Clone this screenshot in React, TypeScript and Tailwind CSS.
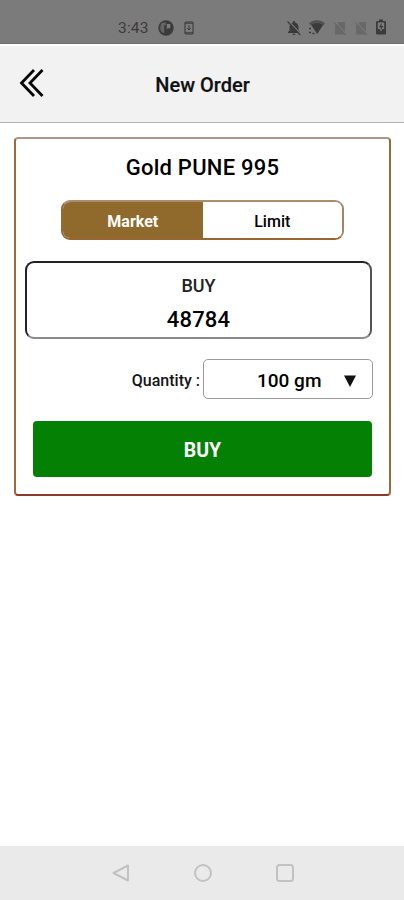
import { useState } from 'react';

type OrderType = 'Market' | 'Limit';

const StatusBar = () => (
  <div className="flex h-11 shrink-0 items-start border-b border-[#6c6c6c] bg-[#7b7b7b] pt-[19px] pl-[118px] text-[#3b3b3b]">
    <span className="w-10 text-[15.5px] leading-[18px] tracking-[0.2px]">3:43</span>
    <svg className="mt-px h-4 w-4" viewBox="0 0 16 16">
      <circle cx="8" cy="8" r="7.7" fill="currentColor" />
      <path d="M3.2 3.6C4.5 2.6 6.5 2.3 8 3V5H6.2V13.2C3.5 12.5 2 10 2.2 7.2Z" fill="#656565" />
      <path d="M8.8 4H12.3V8.2H9.8L8.8 9.5Z" fill="#7b7b7b" />
    </svg>
    <svg className="mt-[2px] ml-[10px] h-[14px] w-[10px]" viewBox="0 0 10 14" fill="none" stroke="currentColor">
      <rect x="1" y="1" width="8" height="12" rx="1" strokeWidth="1.1" />
      <path d="M1 2.2H9M1 11.8H9M5 4.3V9M3.4 7.3L5 9L6.6 7.3" />
    </svg>

    <svg className="mt-px ml-[92px] h-4 w-4" viewBox="0 0 16 16">
      <path
        d="M8 1C8.8 1 9.2 1.6 9.2 2.5C11.5 3.2 12.5 5 12.5 7V10.5L14 12V13H2V12L3.5 10.5V7C3.5 5 4.6 3.2 6.8 2.5C6.8 1.6 7.2 1 8 1ZM6.5 13.7H9.5C9.5 15.5 6.5 15.5 6.5 13.7Z"
        fill="currentColor"
      />
      <path d="M2.5 1L15 14.2" stroke="#7b7b7b" strokeWidth="1.2" />
      <path d="M1.5 1.5L14.3 15" stroke="currentColor" strokeWidth="1.1" />
    </svg>
    <svg className="ml-[6px] h-4 w-[18px]" viewBox="0 0 18 16">
      <path d="M1 4.5C5.5 0.2 12.5 0.2 17 4.5L15.5 6.2C11.5 2.5 6.5 2.5 2.5 6.2Z" fill="#505050" />
      <path d="M3 5.8C6.7 3 11.3 3 15.3 5.8L9.2 15Z" fill="currentColor" />
      <path d="M1 9.5H3M1 13.5H3M4.5 14.5H6.5" stroke="currentColor" strokeWidth="1.5" />
    </svg>
    <NoSimIcon className="ml-[7px]" />
    <NoSimIcon className="ml-[7px]" />
    <svg className="ml-[7px] h-4 w-3" viewBox="0 0 12 16">
      <path
        d="M4 0.5H8V2H9.5C10.3 2 11 2.7 11 3.5V14C11 15 10.3 15.5 9.5 15.5H2.5C1.7 15.5 1 15 1 14V3.5C1 2.7 1.7 2 2.5 2H4Z"
        fill="currentColor"
      />
      <path d="M2.8 3.5H9.2V10H7.5L6 12.5L4.5 10H2.8Z" fill="#7b7b7b" />
      <path d="M6.5 4L4 8.2H5.8V11L8.3 7H6.5Z" fill="currentColor" />
    </svg>
  </div>
);

const NoSimIcon = ({ className }: { className: string }) => (
  <svg className={`mt-px h-4 w-[14px] ${className}`} viewBox="0 0 14 16">
    <path d="M6 2H12V14.5H2V5.5Z" fill="#686868" />
    <path d="M1.5 1.5L14 15" stroke="#7b7b7b" strokeWidth="1.3" />
    <path d="M0.8 2L13 15" stroke="#656565" />
  </svg>
);

const Header = () => (
  <header className="grid h-[79px] shrink-0 grid-cols-[80px_1fr_80px] items-center border-t-2 border-b border-t-white border-b-[#b2b2b2] bg-[#f2f2f2]">
    <button type="button" aria-label="Back" className="pb-[2px] pl-[18px]">
      <svg className="h-[30px] w-[28px]" viewBox="0 0 28 30" fill="none" stroke="#080808" strokeWidth="2.8">
        <path d="M16 2L3.5 15L16 28M24.5 2L12 15L24.5 28" />
      </svg>
    </button>
    <h1 className="pt-px pl-px text-center text-[20px] font-medium text-[#111] [-webkit-text-stroke:0.2px]">
      New Order
    </h1>
  </header>
);

const OrderCard = () => {
  const [orderType, setOrderType] = useState<OrderType>('Market');
  const types: OrderType[] = ['Market', 'Limit'];

  return (
    <section className="mt-[14px] mr-[13px] ml-[14px] flex h-[359px] flex-col rounded-[4px] border-2 border-t-[#ad978b] border-r-[#936c39] border-b-[#8e392d] border-l-[#a06a3a]">
      <h2 className="mt-[14px] text-center text-[22px] leading-[30px] font-medium tracking-[0.25px] text-black">
        Gold PUNE 995
      </h2>

      <div className="mt-[17px] ml-[45px] flex h-10 w-[283px] shrink-0 overflow-hidden rounded-[9px] border-2 border-t-[#ac8d72] border-r-[#a28469] border-b-[#976632] border-l-[#936b30]">
        {types.map((type) => (
          <button
            key={type}
            type="button"
            onClick={() => setOrderType(type)}
            className={`flex-1 pt-[3px] text-[16px] ${
              orderType === type ? 'bg-[#906a2c] font-bold text-white' : 'bg-white font-medium text-black'
            }`}
          >
            {type}
          </button>
        ))}
      </div>

      <div className="mt-[21px] ml-[9px] flex h-[78px] w-[347px] shrink-0 flex-col items-center rounded-[9px] border-2 border-[#222] border-r-[#555] border-b-[#898989] pt-[10px]">
        <span className="text-[18px] leading-[26px] font-medium text-[#222]">BUY</span>
        <span className="mt-[4px] text-[22px] leading-[34px] font-medium tracking-[0.2px] text-black">48784</span>
      </div>

      <div className="mt-5 mr-4 flex items-center justify-end">
        <span className="mt-[3px] mr-[3px] text-[16px] font-medium text-[#151515]">Quantity :</span>
        <button
          type="button"
          className="flex h-10 w-[170px] items-center rounded-[5px] border border-[#999] pt-[4px] pl-[53px] text-[19px] font-medium text-black"
        >
          <span className="w-[87px] text-left">100 gm</span>
          <svg className="h-[12px] w-[12px]" viewBox="0 0 12 12">
            <path d="M0 0.5H12L6 12Z" fill="#111" />
          </svg>
        </button>
      </div>

      <button
        type="button"
        className="mt-[22px] ml-[17px] h-[56px] w-[339px] shrink-0 rounded-[4px] bg-[#048104] pt-[4px] text-[19.5px] font-bold text-white"
      >
        BUY
      </button>
    </section>
  );
};

const NavigationBar = () => (
  <nav className="mt-auto flex h-[54px] shrink-0 items-center justify-center gap-16 bg-[#eaeaea] pl-px text-[#c2c2c2]">
    <svg className="h-[18px] w-[18px]" viewBox="0 0 18 18" fill="none" stroke="currentColor" strokeWidth="2">
      <path d="M1.5 9L16 1.5V16.5Z" strokeLinejoin="round" />
    </svg>
    <svg className="h-[18px] w-[18px]" viewBox="0 0 18 18" fill="none" stroke="currentColor" strokeWidth="2">
      <circle cx="9" cy="9" r="8" />
    </svg>
    <svg className="h-[18px] w-[18px]" viewBox="0 0 18 18" fill="none" stroke="currentColor" strokeWidth="2">
      <rect x="1" y="1" width="16" height="16" rx="2.5" />
    </svg>
  </nav>
);

export default function App() {
  return (
    <div className="flex h-screen flex-col bg-white font-['Roboto',sans-serif]">
      <StatusBar />
      <Header />
      <OrderCard />
      <NavigationBar />
    </div>
  );
}
